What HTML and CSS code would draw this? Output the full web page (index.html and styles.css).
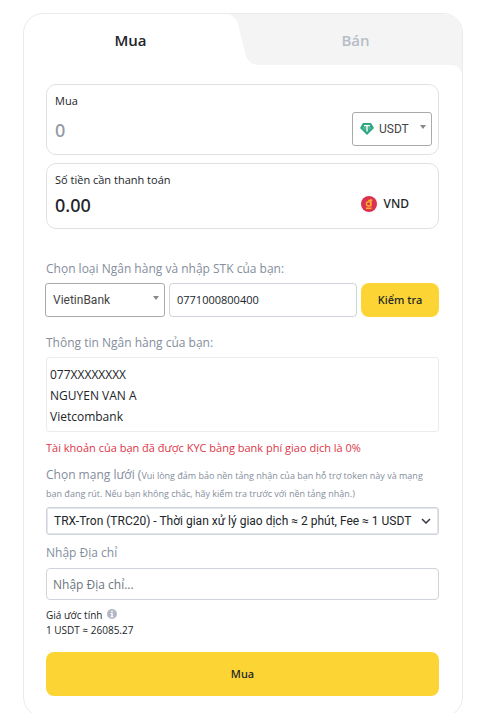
FILE: index.html
```html
<!DOCTYPE html>
<html lang="vi">
<head>
<meta charset="utf-8">
<meta name="viewport" content="width=device-width, initial-scale=1">
<title>Mua USDT</title>
<link rel="stylesheet" href="styles.css">
</head>
<body>
<main class="card">
  <nav class="tabs">
    <button class="tab tab-active" type="button">Mua</button>
    <svg class="tab-curve" viewBox="0 0 32 51" aria-hidden="true"><path d="M0 0C6 1 10 5 11.500 12L18 39C20 47 25 51 32 51V0Z"/></svg>
    <button class="tab tab-idle" type="button">Bán</button>
    <svg class="tab-corner" viewBox="0 0 10 10" aria-hidden="true"><path d="M0 0H10V10A10 10 0 0 0 0 0Z"/></svg>
  </nav>
  <form class="form">
    <section class="amount amount-buy">
      <div class="amount-main">
        <label class="caption" for="amount">Mua</label>
        <input class="figure" id="amount" type="text" placeholder="0">
      </div>
      <div class="picker coin-picker">
        <svg class="coin" viewBox="0 0 14 12" aria-hidden="true"><path fill="#2fa783" d="M3 0H11L14 5L7 12L0 5Z"/><path fill="#fff" d="M4 2H10V3.300H7.700V8.500H6.300V3.300H4Z"/><path fill="none" stroke="#fff" stroke-width=".4" stroke-opacity=".6" d="M6 4.200C2 4.400 2 5.700 6 6M8 4.200C12 4.400 12 5.700 8 6"/></svg>
        <select class="plain-select" aria-label="Loại tiền"><option>USDT</option></select>
        <svg class="triangle" viewBox="0 0 6 4" aria-hidden="true"><path d="M0 0H6L3 4Z"/></svg>
      </div>
    </section>
    <section class="amount amount-pay">
      <div class="amount-main">
        <label class="caption" for="total">Số tiền cần thanh toán</label>
        <output class="figure" id="total">0.00</output>
      </div>
      <div class="currency">
        <svg class="dong" viewBox="0 0 16 16" aria-hidden="true"><circle cx="8" cy="8" r="8" fill="#dc3150"/><g fill="none" stroke="#fdb22b" stroke-width="1.400"><circle cx="7.600" cy="7.800" r="2.200"/><path d="M9.900 3V10.600M7.300 4.400H11.300M5 12.300H10.600"/></g></svg>
        <span>VND</span>
      </div>
    </section>

    <label class="label bank-label" for="account">Chọn loại Ngân hàng và nhập STK của bạn:</label>
    <div class="bank-row">
      <div class="picker bank-picker">
        <select class="plain-select" aria-label="Ngân hàng"><option>VietinBank</option></select>
        <svg class="triangle" viewBox="0 0 6 4" aria-hidden="true"><path d="M0 0H6L3 4Z"/></svg>
      </div>
      <input class="field account" id="account" type="text" value="0771000800400">
      <button class="primary check" type="button">Kiểm tra</button>
    </div>

    <h2 class="label info-label">Thông tin Ngân hàng của bạn:</h2>
    <div class="info">
      <p>077XXXXXXXX</p>
      <p>NGUYEN VAN A</p>
      <p>Vietcombank</p>
    </div>
    <p class="notice">Tài khoản của bạn đã được KYC bằng bank phí giao dịch là 0%</p>

    <label class="label network-label" for="network">Chọn mạng lưới (<small>Vui lòng đảm bảo nền tảng nhận của bạn hỗ trợ token này và mạng bạn đang rút. Nếu bạn không chắc, hãy kiểm tra trước với nền tảng nhận.)</small></label>
    <div class="network">
      <select class="plain-select" id="network"><option>TRX-Tron (TRC20) - Thời gian xử lý giao dịch ≈ 2 phút, Fee ≈ 1 USDT</option></select>
      <svg class="chevron" viewBox="0 0 10 6" aria-hidden="true"><path d="M1 1L5 5L9 1"/></svg>
    </div>

    <label class="label address-label" for="address">Nhập Địa chỉ</label>
    <input class="field address" id="address" type="text" placeholder="Nhập Địa chỉ...">

    <div class="estimate">
      <p>Giá ước tính <svg class="hint" viewBox="0 0 10 10" aria-hidden="true"><circle cx="5" cy="5" r="5" fill="#b2b8c3"/><path fill="#fff" d="M4.200 1.700H5.800V3.200H4.200ZM3.600 4H5.700V7.200H6.400V8.200H3.600V7.200H4.300V5H3.600Z"/></svg></p>
      <p>1 USDT ≈ 26085.27</p>
    </div>
    <button class="primary submit" type="submit">Mua</button>
  </form>
</main>
</body>
</html>
```
FILE: styles.css
```css
* { box-sizing: border-box; }

body {
  margin: 0;
  padding: 13px 16px 0 23px;
  background: #fff;
  color: #212529;
  font: 12px/20px "Open Sans", "Noto Sans", sans-serif;
}

p, h2 { margin: 0; }

button, input, select { font: inherit; color: inherit; }

.card {
  overflow: hidden;
  border: 1px solid #ebebeb;
  border-radius: 20px;
}

.tabs {
  position: relative;
  display: flex;
  height: 51px;
}

.tab {
  flex: 1;
  border: 0;
  background: none;
  font-size: 15px;
  font-weight: 600;
}

.tab-active { padding: 0 0 0 10px; }

.tab-idle {
  padding: 0 10px 0 0;
  background: #f4f4f4;
  color: #b7bdc6;
}

.tab-curve { width: 32px; height: 51px; fill: #f4f4f4; }

.tab-corner {
  position: absolute;
  top: 100%;
  right: 0;
  width: 10px;
  height: 10px;
  fill: #f4f4f4;
}

.form {
  display: flex;
  flex-direction: column;
  padding: 19px 23px 20px 22px;
}

.amount {
  display: flex;
  justify-content: space-between;
  border: 1px solid #dfe1e6;
  border-radius: 10px;
}

.amount-buy { height: 71px; padding: 6px 6px 0 8px; }
.amount-pay { height: 66px; margin-top: 8px; padding: 6px 29px 0 8px; }

.amount-main {
  display: flex;
  flex: 1;
  flex-direction: column;
  min-width: 0;
}

.caption { font-size: 11px; }

.figure {
  width: 100%;
  padding: 0;
  border: 0;
  outline: 0;
  background: none;
  font-family: "Noto Sans", sans-serif;
  font-size: 18px;
  font-weight: 500;
  line-height: 30px;
}

.figure::placeholder { color: #929aa5; opacity: 1; }
.amount-buy .figure { height: 38px; }

.picker {
  position: relative;
  display: flex;
  align-items: center;
  height: 34px;
  border: 1px solid #aaa;
  border-radius: 3px;
  color: #444;
  font-family: Roboto, sans-serif;
}

.coin-picker { width: 80px; margin-top: 21px; padding-left: 7px; }

.coin { width: 14px; height: 12px; flex: none; }

.plain-select {
  width: 100%;
  height: 100%;
  padding: 0;
  border: 0;
  outline: 0;
  appearance: none;
  background: none;
}

.coin-picker .plain-select { padding-left: 5px; }
.bank-picker .plain-select { padding-left: 7px; }

.triangle {
  position: absolute;
  top: 12px;
  right: 5px;
  width: 6px;
  height: 4px;
  fill: #888;
  pointer-events: none;
}

.currency {
  display: flex;
  align-items: center;
  gap: 7px;
  height: 68px;
  font-family: "Noto Sans", sans-serif;
  font-weight: 500;
}

.dong { width: 16px; height: 16px; }

.label {
  color: #848e9c;
  font-size: 12px;
  font-weight: 400;
  line-height: 20px;
}

.bank-label { margin-top: 30px; }

.bank-row { display: flex; gap: 4px; margin: 4px 0 0 -1px; }

.bank-picker { width: 120px; flex: none; }

.field {
  min-width: 0;
  border: 1px solid #ced4da;
  border-radius: 4px;
  outline: 0;
  background: #fff;
}

.account { flex: 1; padding: 0 7px; font-size: 11px; }

.primary {
  border: 0;
  border-radius: 8px;
  background: #fcd535;
  font-family: "Noto Sans", sans-serif;
  font-size: 11px;
  font-weight: 500;
}

.check { width: 78px; flex: none; padding: 0; }

.info-label { margin-top: 16px; }

.info {
  height: 75px;
  margin-top: 4px;
  padding: 6px 3px;
  border: 1px solid #eaecef;
  border-radius: 3px;
  line-height: 21px;
}

.notice { margin-top: 6px; color: #dc3545; font-size: 11px; }

.network-label { margin-top: 8px; line-height: 18px; }
.network-label small { font-size: 9px; line-height: 1; }

.network {
  position: relative;
  height: 28px;
  margin-top: 5px;
  padding: 0 20px 0 7px;
  border: 1px solid #ced4da;
  border-radius: 3px;
  box-shadow: inset 0 0 0 1px #e3e6eb;
  font-family: Roboto, sans-serif;
}

.chevron {
  position: absolute;
  top: 10px;
  right: 7px;
  width: 10px;
  height: 6px;
  fill: none;
  stroke: #343a40;
  stroke-width: 1.5px;
  pointer-events: none;
}

.address-label { margin-top: 8px; }
.address { height: 32px; margin-top: 5px; padding: 0 6px; }
.address::placeholder { color: #6c757d; opacity: 1; }

.estimate { margin-top: 8px; font-size: 10px; line-height: 15px; }

.hint { width: 10px; height: 10px; margin-left: 2px; }

.submit { height: 44px; margin-top: 14px; }
```
